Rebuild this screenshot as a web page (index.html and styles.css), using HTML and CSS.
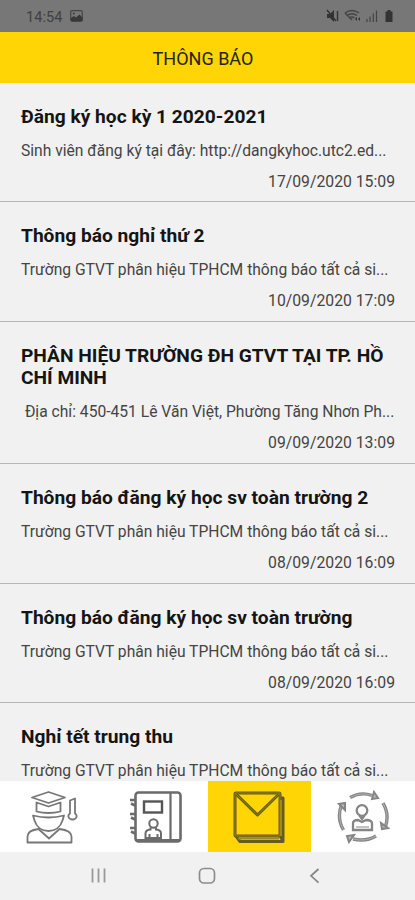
FILE: index.html
```html
<!DOCTYPE html>
<html lang="vi">
<head>
<meta charset="utf-8">
<meta name="viewport" content="width=device-width, initial-scale=1">
<title>Thông báo</title>
<link rel="stylesheet" href="styles.css">
</head>
<body>
<div class="screen">
  <div class="status">
    <span class="clock">14:54</span>
    <svg class="photo" width="13" height="12" viewBox="0 0 13 12"><rect x=".7" y=".7" width="11.6" height="10.6" rx="1.5" fill="none" stroke="#444" stroke-width="1.2"/><path d="M1 8l3-2 2 1.500 3.500-3 3 3V11H1z" fill="#383838"/><circle cx="3.800" cy="3.600" r="1" fill="#383838"/></svg>
    <svg class="signals" width="68" height="16" viewBox="0 0 68 16">
      <path d="M1 6h3l4-4v12l-4-4H1zM59.500 3.500h2V2h3v1.500h2V14h-7z" fill="#333"/>
      <path d="M1 2l9 11M11.500 3v10" stroke="#333" stroke-width="1.400" fill="none"/>
      <g fill="none" stroke="#444" stroke-width="1.400"><path d="M19 5q7-5 14 0M21 7.500q5-3.500 10 0M23.500 10q2.500-2 5 0"/><path d="M26 12l-7-7"/></g>
      <path d="M29 11l2-2v4zM34 9v4l-2-2z" fill="#333"/>
      <path d="M41 11v3M44 8.500V14M47.300 5.500V14M50.500 2.500V14" stroke="#444" stroke-width="1.200"/>
    </svg>
  </div>
  <header class="header">THÔNG BÁO</header>
  <main class="list">
    <article class="item"><h2>Đăng ký học kỳ 1 2020-2021</h2><p>Sinh viên đăng ký tại đây: http://dangkyhoc.utc2.ed...</p><time>17/09/2020 15:09</time></article>
    <article class="item"><h2>Thông báo nghỉ thứ 2</h2><p>Trường GTVT phân hiệu TPHCM thông báo tất cả si...</p><time>10/09/2020 17:09</time></article>
    <article class="item"><h2>PHÂN HIỆU TRƯỜNG ĐH GTVT TẠI TP. HỒ CHÍ MINH</h2><p>&nbsp;Địa chỉ: 450-451 Lê Văn Việt, Phường Tăng Nhơn Ph...</p><time>09/09/2020 13:09</time></article>
    <article class="item"><h2>Thông báo đăng ký học sv toàn trường 2</h2><p>Trường GTVT phân hiệu TPHCM thông báo tất cả si...</p><time>08/09/2020 16:09</time></article>
    <article class="item"><h2>Thông báo đăng ký học sv toàn trường</h2><p>Trường GTVT phân hiệu TPHCM thông báo tất cả si...</p><time>08/09/2020 16:09</time></article>
    <article class="item"><h2>Nghỉ tết trung thu</h2><p>Trường GTVT phân hiệu TPHCM thông báo tất cả si...</p></article>
  </main>
  <nav class="tabs">
    <a class="tab"><svg width="52" height="54" viewBox="0 0 52 54" fill="none" stroke="#777" stroke-width="1.800" stroke-linejoin="round">
      <path d="M6 7.500L22.500 2 39 7.500 22.500 13z"/><path d="M10.500 12.500l12 4 12-4v9q-12 3-24 0z"/><path d="M7 25.500q15.500 4 31 0l-1.500 5C34.500 37 29 41 22.500 41S10.500 37 8.500 30.500z"/><path d="M1.500 52.500v-6c0-4 3-6.500 11-7.500l10.500 9.500L33.500 39c8 1 12 3.500 12 7.500v6z"/><path d="M44 10.500l5-2v15c3 2 1.500 6-2.500 6s-5.500-4-2.500-6z"/>
    </svg></a>
    <a class="tab"><svg width="52" height="54" viewBox="0 0 52 54" fill="none" stroke="#6b6b6b" stroke-width="2">
      <rect x="5.500" y="2.500" width="45" height="49" rx="3" stroke-width="2.600"/><path d="M40.500 3v48M5.500 50H50" stroke-width="2.200"/><rect x="14" y="11.500" width="18" height="11" stroke="#555" stroke-width="2.400"/><circle cx="23.500" cy="33.500" r="4.200"/><path d="M20.500 37.500v2q-5 .500-5 4V48H31v-4.500q0-3.500-5-4v-2M19.500 48v-4M27.500 48v-4"/>
      <path d="M0 10h5M1 13.500l4 2M0 24h5M1 27.500l4 2M0 38h5M1 41.500l4 2" stroke-width="2.600"/>
    </svg></a>
    <a class="tab active"><svg width="52" height="54" viewBox="0 0 52 54" fill="none" stroke-linejoin="round">
      <g stroke="#635b22" stroke-width="3"><rect x="2" y="3" width="45" height="43" rx="1"/><path d="M3 4l21.500 21L46 4"/><path d="M47 8h3v43.500H7L3 46M47 46l3 5"/></g><path d="M3 4l21.500 21L46 4M2 3h45v43H2z" stroke="#a18c18" stroke-width=".8"/><path d="M48 10v36M5 48.500h41" stroke="#a18a1c" stroke-width="2"/>
    </svg></a>
    <a class="tab"><svg width="54" height="54" viewBox="0 0 54 54" fill="none" stroke="#858585" stroke-width="2.300">
      <path d="M14 7.500q11-6 22-2M47 13q7 12 2 25M40 46q-10 6-23 3M7.500 40q-7-12-2-25" stroke-width="3.400"/><path d="M14 7.500q11-6 22-2M47 13q7 12 2 25M40 46q-10 6-23 3M7.500 40q-7-12-2-25" stroke="#ccc" stroke-width=".6"/>
      <path d="M36 9l6-1-4-6zM45 33l1 6 6-1zM18 45l-7 1 2 6zM9 20v-7l-6 1z" fill="#bbb" stroke-width="2"/>
      <circle cx="26" cy="20.500" r="5.300"/><path d="M23.500 25.500L26 29l2.500-3.500"/><path d="M17 40v-6.500q0-3.500 5-3.500l4 2 4-2q6 0 6 3.500V40z"/><path d="M20 37h13" stroke-width="1"/>
    </svg></a>
  </nav>
  <div class="system">
    <svg width="18" height="18" viewBox="0 0 18 18"><path d="M2.500 1.500v14M8.500 1.500v14M14.500 1.500v14" stroke="#999" stroke-width="1.800"/></svg>
    <svg width="18" height="18" viewBox="0 0 18 18"><rect x="1.500" y="1.500" width="15" height="14.500" rx="4.500" fill="none" stroke="#8c8c8c" stroke-width="1.700"/></svg>
    <svg width="18" height="18" viewBox="0 0 18 18"><path d="M12.500 2L5 8.800l7.500 6.800" fill="none" stroke="#858585" stroke-width="1.700"/></svg>
  </div>
</div>
</body>
</html>
```
FILE: styles.css
```css
* { box-sizing: border-box; }
body { margin: 0; background: #f1f1f1; font-family: Roboto, "Noto Sans", sans-serif; }
.screen { display: flex; flex-direction: column; width: 415px; height: 900px; overflow: hidden; }
.status { display: flex; align-items: center; height: 32px; flex: none; padding: 0 21px 0 26px; background: #777; color: #404040; }
.clock { font-size: 14.5px; letter-spacing: .1px; margin-top: 2px; }
.photo { margin-left: 7px; }
.signals { margin-left: auto; }
.header { flex: none; height: 50.700px; line-height: 53px; text-align: center; padding-right: 9px; font-size: 18px; background: #ffd505; color: #28230b; }
.list { flex: 1; min-height: 0; overflow: hidden; }
.item { display: flex; flex-direction: column; padding: 23px 20px 10.700px 21px; border-bottom: 1px solid #b7b7b7; }
.item h2 { margin: 0; font-size: 19.180px; line-height: 22.200px; font-weight: 700; color: #151515; }
.item p { margin: 12.800px 0 0; font-size: 15.640px; line-height: 19px; white-space: nowrap; color: #444; }
.item time { margin-top: 12px; font-size: 15.750px; line-height: 19px; text-align: right; color: #444; }
.tabs { flex: none; display: grid; grid-template-columns: repeat(4, 1fr); height: 71px; background: #fff; }
.tab { display: flex; align-items: center; justify-content: center; }
.active { background: #ffd505; }
.system { flex: none; display: flex; justify-content: space-between; align-items: center; height: 48px; padding: 0 91px 0 90px; }
```
